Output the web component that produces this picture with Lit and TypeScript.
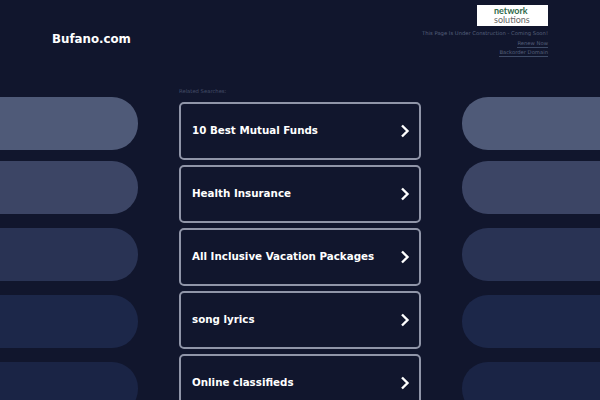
import { LitElement, html, css } from "lit";
import { customElement } from "lit/decorators.js";

const PILLS = ["#4f5a78", "#3c4565", "#293354", "#1c2749", "#1a2445"];
const LINKS = ["10 Best Mutual Funds", "Health Insurance", "All Inclusive Vacation Packages", "song lyrics", "Online classifieds"];

@customElement("app-root")
export class AppRoot extends LitElement {
  static styles = css`
    :host { display: block; width: 600px; height: 400px; overflow: hidden; background: #11162d; font-family: "DejaVu Sans", sans-serif; }
    .top { display: flex; justify-content: space-between; align-items: flex-start; height: 87px; padding: 5px 52px 0; box-sizing: border-box; }
    .brand { margin-top: 26px; color: #fff; font-size: 11.8px; font-weight: 700; line-height: 16px; }
    .info { display: flex; flex-direction: column; align-items: flex-end; }
    .logo { width: 71px; height: 21px; padding: 2px 0 0 17px; box-sizing: border-box; background: #fff; display: flex; flex-direction: column; align-items: flex-start; font-family: "Lato", sans-serif; font-size: 9px; line-height: 8.5px; color: #666; margin-bottom: 3px; }
    .logo b { color: #2f6b4a; font-weight: 700; }
    .note, .link { color: #56607c; font-size: 5.25px; line-height: 8px; }
    .link { margin-top: 2px; border-bottom: 1px solid #3d4a66; height: 8px; }
    .link + .link { margin-top: 0; }
    .main { display: grid; grid-template-columns: 138px 1fr 138px; }
    .side { display: flex; flex-direction: column; gap: 14px; padding-top: 10px; }
    .pill { height: 53px; flex: none; }
    .pill:first-child { margin-bottom: -3px; }
    .left .pill { border-radius: 0 26px 26px 0; }
    .right .pill { border-radius: 26px 0 0 26px; }
    .center { width: 242px; justify-self: center; }
    .label { color: #454e69; font-size: 5.25px; line-height: 8px; height: 15px; }
    .cards { display: flex; flex-direction: column; gap: 5px; }
    .card { height: 58px; box-sizing: border-box; border: 2px solid #9095a8; border-radius: 5px; display: flex; align-items: center; justify-content: space-between; padding: 0 9px 0 11px; color: #fff; font-size: 10.3px; font-weight: 700; white-space: nowrap; }
    .card span { padding-bottom: 2px; }
    svg { display: block; width: 10px; height: 14px; }
  `;
  pills() {
    return PILLS.map((c) => html`<div class="pill" style="background:${c}"></div>`);
  }
  render() {
    return html`
      <div class="top">
        <div class="brand">Bufano.com</div>
        <div class="info">
          <div class="logo"><b>network</b><span>solutions</span></div>
          <div class="note">This Page Is Under Construction - Coming Soon!</div>
          <div class="link">Renew Now</div>
          <div class="link">Backorder Domain</div>
        </div>
      </div>
      <div class="main">
        <div class="side left">${this.pills()}</div>
        <div class="center">
          <div class="label">Related Searches:</div>
          <div class="cards">
            ${LINKS.map((t) => html`<div class="card"><span>${t}</span>
              <svg viewBox="0 0 10 14"><path d="M2 1.5 7.5 7 2 12.5" fill="none" stroke="#fff" stroke-width="2.4"/></svg></div>`)}
          </div>
        </div>
        <div class="side right">${this.pills()}</div>
      </div>`;
  }
}
